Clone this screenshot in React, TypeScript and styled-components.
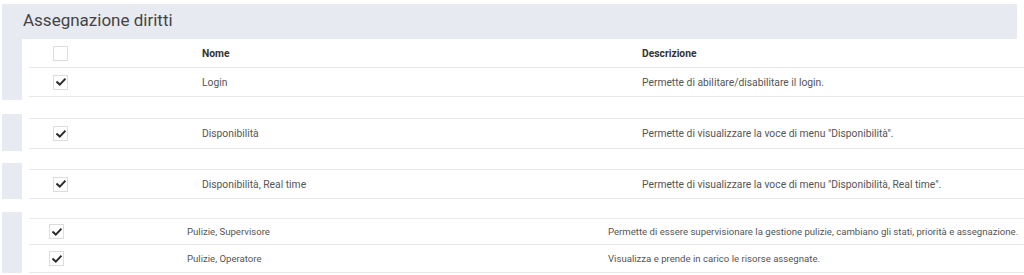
import React from "react";
import styled, { createGlobalStyle } from "styled-components";

const Global = createGlobalStyle`
  html, body { margin: 0; padding: 0; background: #ffffff; }
  body { font-family: Roboto, "Noto Sans", Arial, sans-serif; }
`;

const Page = styled.div`
  padding: 4px 0 0 2px;
  width: 1022px;
  height: 271px;
  overflow: hidden;
  background: #fff;
`;

const TitleBar = styled.div`
  height: 35px;
  box-sizing: border-box;
  margin-right: 7px;
  background: #e8eaf2;
  display: flex;
  align-items: center;
  padding: 0 0 3px 21px;
  font-size: 17px;
  color: #444;
  font-weight: 400;
`;

const Section = styled.div<{ $gap: number }>`
  display: flex;
  margin-bottom: ${(p) => p.$gap}px;
`;

const Strip = styled.div`
  width: 20px;
  flex: none;
  background: #e8eaf2;
`;

const Body = styled.div<{ $top: number; $bottom: number }>`
  flex: 1;
  padding: ${(p) => p.$top}px 0 ${(p) => p.$bottom}px 7px;
`;

const Table = styled.div<{ $bordered: boolean; $fs: number }>`
  border-top: ${(p) => (p.$bordered ? "1px solid #e9e9ec" : "none")};
  font-size: ${(p) => p.$fs}px;
`;

const Row = styled.div<{ $cols: string; $h: number }>`
  display: grid;
  grid-template-columns: ${(p) => p.$cols};
  height: ${(p) => p.$h}px;
  align-items: center;
  border-bottom: 1px solid #e9e9ec;
  box-sizing: border-box;
`;

const Cell = styled.div<{ $head?: boolean; $pad?: number }>`
  color: ${(p) => (p.$head ? "#333" : "#555")};
  font-weight: ${(p) => (p.$head ? 700 : 400)};
  padding-left: ${(p) => p.$pad ?? 0}px;
  white-space: nowrap;
  display: flex;
  align-items: center;
`;

const Box = styled.div`
  width: 15px;
  height: 15px;
  box-sizing: border-box;
  border: 1px solid #dcdde2;
  background: #fff;
  display: flex;
  align-items: center;
  justify-content: center;
`;

const Check = () => (
  <svg width="10" height="8" viewBox="0 0 10 8">
    <path d="M1.2 4.2 L3.8 6.6 L8.8 1.4" fill="none" stroke="#2b2b2b" strokeWidth="2" strokeLinecap="square" />
  </svg>
);

const CheckBox = ({ checked }: { checked: boolean }) => <Box>{checked && <Check />}</Box>;

type R = { name: string; desc: string; h: number };

const colsA = "173px 440px 1fr";
const colsB = "158px 421px 1fr";

const sections: {
  header?: boolean;
  rows: R[];
  cols: string;
  cbPad: number;
  top: number;
  bottom: number;
  gap: number;
  fs: number;
}[] = [
  {
    header: true,
    rows: [{ name: "Login", desc: "Permette di abilitare/disabilitare il login.", h: 29 }],
    cols: colsA,
    cbPad: 24,
    top: 0,
    bottom: 3,
    gap: 14,
    fs: 10.3,
  },
  {
    rows: [{ name: "Disponibilità", desc: 'Permette di visualizzare la voce di menu "Disponibilità".', h: 30 }],
    cols: colsA,
    cbPad: 24,
    top: 4,
    bottom: 2,
    gap: 12,
    fs: 10.3,
  },
  {
    rows: [
      {
        name: "Disponibilità, Real time",
        desc: 'Permette di visualizzare la voce di menu "Disponibilità, Real time".',
        h: 29,
      },
    ],
    cols: colsA,
    cbPad: 24,
    top: 6,
    bottom: 0,
    gap: 13,
    fs: 10.3,
  },
  {
    rows: [
      {
        name: "Pulizie, Supervisore",
        desc: "Permette di essere supervisionare la gestione pulizie, cambiano gli stati, priorità e assegnazione.",
        h: 26,
      },
      { name: "Pulizie, Operatore", desc: "Visualizza e prende in carico le risorse assegnate.", h: 28 },
    ],
    cols: colsB,
    cbPad: 20,
    top: 6,
    bottom: 0,
    gap: 0,
    fs: 9.6,
  },
];

export default function App() {
  return (
    <>
      <Global />
      <Page>
        <TitleBar>Assegnazione diritti</TitleBar>
        {sections.map((s, i) => (
          <Section key={i} $gap={s.gap}>
            <Strip />
            <Body $top={s.top} $bottom={s.bottom}>
              <Table $bordered={!s.header} $fs={s.fs}>
                {s.header && (
                  <Row $cols={s.cols} $h={29}>
                    <Cell $pad={s.cbPad}>
                      <CheckBox checked={false} />
                    </Cell>
                    <Cell $head>Nome</Cell>
                    <Cell $head>Descrizione</Cell>
                  </Row>
                )}
                {s.rows.map((r) => (
                  <Row key={r.name} $cols={s.cols} $h={r.h}>
                    <Cell $pad={s.cbPad}>
                      <CheckBox checked />
                    </Cell>
                    <Cell>{r.name}</Cell>
                    <Cell>{r.desc}</Cell>
                  </Row>
                ))}
              </Table>
            </Body>
          </Section>
        ))}
      </Page>
    </>
  );
}
